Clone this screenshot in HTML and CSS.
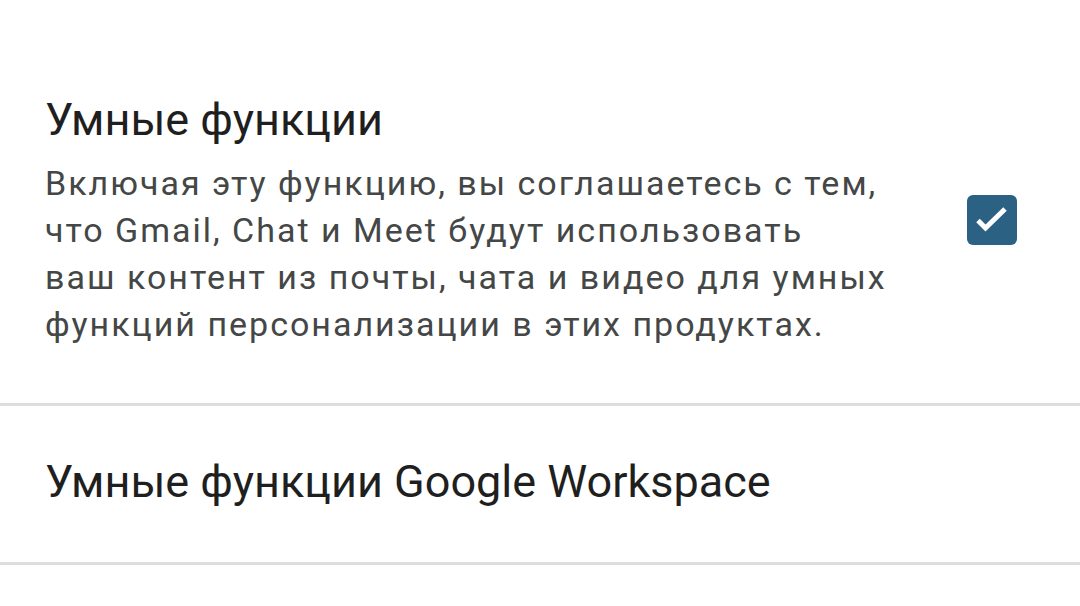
FILE: index.html
```html
<!DOCTYPE html>
<html lang="ru">
<head>
  <meta charset="UTF-8">
  <meta name="viewport" content="width=device-width, initial-scale=1.0">
  <title>Умные функции</title>
  <link rel="stylesheet" href="styles.css">
</head>
<body>
  <div class="settings-list">
    <div class="setting-row">
      <div class="setting-text">
        <h2 class="setting-title">Умные функции</h2>
        <p class="setting-desc">Включая эту функцию, вы соглашаетесь с тем, что Gmail, Chat и Meet будут использовать ваш&nbsp;контент из почты, чата и видео для умных функций персонализации в этих продуктах.</p>
      </div>
      <div class="checkbox checked">
        <svg viewBox="0 0 50 50" width="50" height="50">
          <path d="M11 25.5l7.5 7.5L38 14" fill="none" stroke="#fff" stroke-width="5" stroke-linecap="butt"/>
        </svg>
      </div>
    </div>
    <div class="setting-row link-row">
      <h2 class="setting-title">Умные функции Google Workspace</h2>
    </div>
  </div>
</body>
</html>
```

FILE: styles.css
```css
body {
  margin: 0;
  background-color: #ffffff;
  font-family: Roboto, "Noto Sans", Arial, sans-serif;
}

.settings-list {
  width: 1080px;
}

.setting-row {
  display: flex;
  align-items: center;
  justify-content: space-between;
  padding: 92px 63px 55px 45px;
  border-bottom: 3px solid #dddddd;
}

.setting-text {
  width: 880px;
}

.setting-title {
  margin: 0;
  font-size: 45px;
  font-weight: 400;
  color: #1f1f1f;
  line-height: 56px;
}

.setting-desc {
  margin: 12px 0 0;
  font-size: 34px;
  line-height: 47px;
  letter-spacing: 2px;
  color: #444746;
}

.checkbox {
  width: 50px;
  height: 50px;
  border-radius: 6px;
  flex-shrink: 0;
}

.checkbox svg {
  display: block;
}

.checkbox.checked {
  background-color: #2b6284;
}

.link-row {
  padding: 48px 45px 52px;
}
```
